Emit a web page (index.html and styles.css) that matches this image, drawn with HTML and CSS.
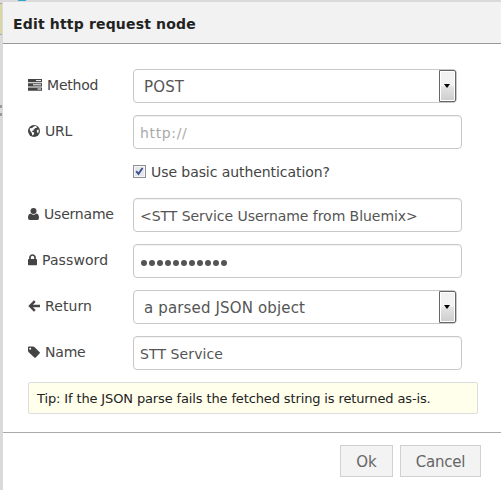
FILE: index.html
```html
<!DOCTYPE html>
<html lang="en">
<head>
<meta charset="utf-8">
<title>Edit http request node</title>
<link rel="stylesheet" href="styles.css">
</head>
<body>
<div class="workspace"><i class="node"></i><i class="status"></i><i class="port"></i></div>
<section class="dialog">
  <header class="title"><span>Edit http request node</span></header>
  <main class="form">
    <div class="row">
      <div class="label"><svg width="14" height="12" viewBox="0 0 14 12"><path fill="#444" d="M0 0h14v3.3H0zM0 4.2h14v3.3H0zM0 8.4h14v3.3H0z"/><path stroke="#fff" d="M8 1.6h5M5 5.8h8M9.5 10h3.5"/></svg><span>Method</span></div>
      <div class="select"><span>POST</span><b class="drop"></b></div>
    </div>
    <div class="row">
      <div class="label"><svg width="12" height="12" viewBox="0 0 12 12"><circle cx="6" cy="6" r="6" fill="#444"/><path fill="#fff" d="M6.2 1.3 7.6 1l1.4 1.1-.5.8-1.4.2-.8 1.2-1.2.7.5 1-1.2-.3-.6.2.5.8 1.4.6.6 1.1-.9 1.3-.5.9-.8-.7-.2-1.8L3 7 2 5.3 1.7 4l.7-1 1.3.2L5 2.2zM9.3 5l1.2-.5.3 1.5-.5 1.7-.7.6-.5-1.5-.5-.9z"/></svg><span>URL</span></div>
      <div class="input placeholder"><span>http://</span></div>
    </div>
    <div class="check"><i class="box"><svg width="9" height="9" viewBox="0 0 9 9"><path d="M1.2 4.2 3.5 7 7.5 1" fill="none" stroke="#3c4f8d" stroke-width="1.9"/></svg></i><span>Use basic authentication?</span></div>
    <div class="row">
      <div class="label"><svg width="11" height="12" viewBox="0 0 11 12"><circle cx="5.5" cy="3" r="3" fill="#444"/><path fill="#444" d="M2.6 5.4Q5.5 8 8.4 5.4 11 5.7 11 10q0 2-1.8 2H1.8Q0 12 0 10 0 5.7 2.6 5.4z"/></svg><span>Username</span></div>
      <div class="input"><span>&lt;STT Service Username from Bluemix&gt;</span></div>
    </div>
    <div class="row">
      <div class="label"><svg width="9" height="12" viewBox="0 0 9 12"><path d="M2 6V3.5a2.5 2.5 0 0 1 5 0V6" fill="none" stroke="#444" stroke-width="1.7"/><rect y="5" width="9" height="6.3" rx=".7" fill="#444"/></svg><span class="wide">Password</span></div>
      <div class="input"><span class="dots"><i></i><i></i><i></i><i></i><i></i><i></i><i></i><i></i><i></i><i></i><i></i></span></div>
    </div>
    <div class="row">
      <div class="label"><svg width="12" height="12" viewBox="0 0 12 12"><path d="M6.8 1.2 2 6l4.8 4.8M2.2 6H12" fill="none" stroke="#444" stroke-width="2.4"/></svg><span class="wide">Return</span></div>
      <div class="select"><span>a parsed JSON object</span><b class="drop"></b></div>
    </div>
    <div class="row">
      <div class="label"><svg width="12" height="12" viewBox="0 0 12 12"><path fill="#444" fill-rule="evenodd" d="M0 1.5Q0 .5 1 .5h4q.8 0 1.4.6l5.1 5q.8.7 0 1.5L7.8 11.4q-.7.7-1.5 0L.7 6.2Q0 5.5 0 4.7zM2.2 1.7a1 1 0 1 0 0 2 1 1 0 0 0 0-2z"/></svg><span>Name</span></div>
      <div class="input"><span class="wide">STT Service</span></div>
    </div>
    <div class="tip"><span>Tip: If the JSON parse fails the fetched string is returned as-is.</span></div>
  </main>
  <footer class="actions"><div class="button ok"><span>Ok</span></div><div class="button cancel"><span>Cancel</span></div></footer>
</section>
</body>
</html>
```
FILE: styles.css
```css
* { box-sizing: border-box; }
body { margin: 0; width: 501px; height: 490px; overflow: hidden; background: #dadada; font: 14px/20px Verdana, "DejaVu Sans", sans-serif; color: #444; padding: 2px 0 0 3px; }
span { white-space: nowrap; }
.workspace i { position: absolute; }
.node { left: 0; top: 3px; width: 2px; height: 32px; background: #d9d5a4; border: solid #aaa; border-width: 1px 0; }
.status { left: 18px; top: 0; width: 8px; height: 1px; background: #35a4cf; }
.port { left: 0; top: 105px; width: 2px; height: 11px; border: solid #999; border-width: 3px 0; }
.dialog { position: relative; height: 488px; background: #fff; display: flex; flex-direction: column; }
.title { height: 42px; background: #f2f2f2; border-bottom: 1px solid #999; padding: 12px 0 0 10px; font-weight: bold; color: #222; letter-spacing: .17px; }
.form { height: 388px; padding: 25px 23px 0 25px; }
.row { display: flex; height: 34px; margin-bottom: 12px; }
.label { width: 105px; display: flex; align-items: flex-start; gap: 5px; padding-top: 6px; letter-spacing: -.2px; }
.label svg { margin-top: 4px; flex: none; }
.wide { letter-spacing: .1px; }
.input, .select { width: 329px; height: 34px; border: 1px solid #c8c8c8; border-radius: 4px; padding: 7px 6px; color: #555; box-shadow: inset 0 1px 1px rgba(0,0,0,.06); letter-spacing: -.05px; }
.select { position: relative; width: 324px; padding-left: 10px; box-shadow: none; font-size: 15px; letter-spacing: .15px; }
.placeholder { color: #aaa; letter-spacing: .65px; }
.drop { position: absolute; right: 0; top: 0; width: 17px; height: 32px; border: 1px solid #666; border-radius: 0 2px 2px 0; box-shadow: inset 0 0 0 1px #fff; background: linear-gradient(#f2f2f2 0 49%, #e4e4e4 50%, #cdcdcd); }
.drop::after { content: ""; position: absolute; left: 4px; top: 13px; border: solid transparent; border-width: 4px 3.5px 0; border-top-color: #000; }
.check { height: 37px; display: flex; padding: 1px 0 0 105px; gap: 5px; letter-spacing: -.07px; }
.box { width: 13px; height: 13px; margin-top: 3px; border: 1px solid #8e8f8f; background: #e4e7ee; box-shadow: inset 0 0 0 1px #f6f6f6; padding: 1px; line-height: 0; }
.dots { display: flex; gap: 2px; padding: 8px 0 0 1px; }
.dots i { width: 6px; height: 6px; border-radius: 50%; background: #555; }
.tip { width: 450px; height: 32px; border: 1px solid #ddd; border-radius: 2px; background: #ffffec; color: #222; font-size: 13px; letter-spacing: -.13px; padding: 6px 8px; }
.actions { height: 58px; border-top: 1px solid #aaa; display: flex; justify-content: flex-end; gap: 7px; padding: 12px 20px 0 0; }
.button { height: 32px; width: 53px; border: 1px solid #d0d0d0; background: #f3f3f3; color: #666; text-align: center; padding-top: 6px; font-size: 15px; }
.cancel { width: 81px; letter-spacing: -.25px; }
```
